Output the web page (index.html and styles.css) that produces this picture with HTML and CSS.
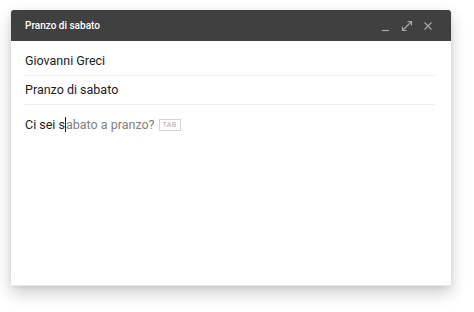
FILE: index.html
```html
<!DOCTYPE html>
<html lang="it">
<head>
<meta charset="UTF-8" />
<meta name="viewport" content="width=device-width, initial-scale=1" />
<title>Pranzo di sabato</title>
<link rel="stylesheet" href="styles.css">
</head>
<body>
  <div class="compose">
    <header class="compose-head">
      <span class="title">Pranzo di sabato</span>
      <div class="actions">
        <svg class="icon" width="12" height="12" viewBox="0 0 12 12"><path d="M2 10.5h7" stroke="#a8a8a8" stroke-width="1.2"/></svg>
        <svg class="icon" width="12" height="12" viewBox="0 0 12 12"><path d="M1.5 10.5l9-9M6.5 1.5h4v4M1.5 6.5v4h4" stroke="#a8a8a8" stroke-width="1.2" fill="none"/></svg>
        <svg class="icon" width="12" height="12" viewBox="0 0 12 12"><path d="M2.5 2.5l7 7M9.5 2.5l-7 7" stroke="#a8a8a8" stroke-width="1.2"/></svg>
      </div>
    </header>
    <div class="compose-body">
      <div class="field">Giovanni Greci</div>
      <div class="field">Pranzo di sabato</div>
      <div class="message">
        <span class="typed">Ci sei s</span><span class="caret"></span><span class="suggest">abato a pranzo?</span>
        <span class="tab">TAB</span>
      </div>
    </div>
  </div>
</body>
</html>
```
FILE: styles.css
```css
html, body {
  height: 100%;
}
body {
  margin: 0;
  padding: 10px 0 0 11px;
  box-sizing: border-box;
  min-height: 312px;
  background: #fff;
  font-family: Roboto, "Liberation Sans", Arial, sans-serif;
  color: #212121;
}
.compose {
  box-sizing: border-box;
  width: 440px;
  height: 276px;
  background: #fff;
  border-bottom: 1px solid #ececec;
  border-radius: 3px 3px 0 0;
  box-shadow: 0 7px 16px rgb(0 0 0 / 0.2), 0 1px 4px rgb(0 0 0 / 0.08);
}
.compose-head {
  display: flex;
  justify-content: space-between;
  align-items: center;
  height: 31px;
  padding: 0 17px 0 14px;
  background: #404040;
  border-radius: 3px 3px 0 0;
}
.compose-head .title {
  color: #fff;
  font-size: 10px;
  font-weight: 500;
}
.actions {
  display: flex;
  gap: 9px;
  padding-top: 1px;
}
.compose-body {
  padding: 6px 16px 0 14px;
}
.field {
  box-sizing: border-box;
  height: 29px;
  padding-bottom: 2px;
  display: flex;
  align-items: center;
  font-size: 12.5px;
  border-bottom: 1px solid #eceff1;
}
.message {
  display: flex;
  align-items: center;
  margin-top: 12px;
  font-size: 12.5px;
}
.caret {
  display: inline-block;
  width: 1px;
  height: 15px;
  background: #212121;
}
.suggest {
  color: #808080;
}
.tab {
  margin-left: 4px;
  padding: 1px 3px;
  border: 1px solid #d4d4d4;
  color: #aaa;
  font-size: 7px;
  letter-spacing: 0.4px;
}
```
